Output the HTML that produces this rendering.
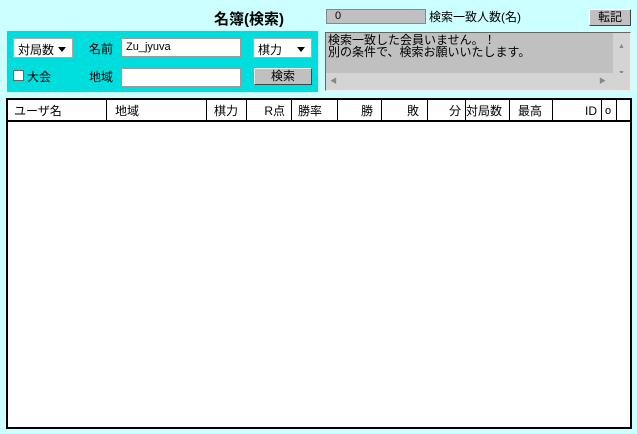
<!DOCTYPE html>
<html><head><meta charset="utf-8"><style>
*{margin:0;padding:0;box-sizing:border-box}
body{width:637px;height:434px;background:#ccffff;position:relative;overflow:hidden;font-family:"Liberation Sans","Noto Sans CJK JP",sans-serif;font-size:12px;color:#000}
.a{position:absolute}
.sel{background:#fff;border:1px solid #aaa;height:20px;padding:2px 4px;font-size:12px}
.sel:after{content:"";position:absolute;right:6px;top:8px;border:4px solid transparent;border-top:5px solid #000}
.inp{background:#fff;border:1px solid #999;height:19px;padding:2px 4px;font-size:11px}
.btn{background:#c0c0c0;border:1px solid;border-color:#fff #444 #444 #fff;text-align:center;font-size:12px}
.th{position:absolute;top:0;height:22px;border-right:1px solid #000;line-height:22px;font-size:12px}
</style></head><body>
<div class="a" style="left:214px;top:8px;font-size:15px;font-weight:bold">名簿(検索)</div>
<div class="a" style="left:326px;top:9px;width:100px;height:15px;background:#c0c0c0;border:1px solid #888;font-size:11px;padding-left:8px;line-height:13px">0</div>
<div class="a" style="left:429px;top:8px">検索一致人数(名)</div>
<div class="a btn" style="left:589px;top:9px;width:42px;height:17px;line-height:15px">転記</div>
<div class="a" style="left:7px;top:31px;width:311px;height:61px;background:#00dddd"></div>
<div class="a sel" style="left:13px;top:38px;width:60px">対局数</div>
<div class="a" style="left:89px;top:40px">名前</div>
<div class="a inp" style="left:121px;top:38px;width:120px">Zu_jyuva</div>
<div class="a sel" style="left:253px;top:38px;width:59px">棋力</div>
<div class="a" style="left:13px;top:70px;width:11px;height:11px;background:#fff;border:1px solid #666"></div>
<div class="a" style="left:27px;top:68px">大会</div>
<div class="a" style="left:89px;top:68px">地域</div>
<div class="a inp" style="left:121px;top:68px;width:120px"></div>
<div class="a btn" style="left:254px;top:68px;width:58px;height:17px;line-height:15px">検索</div>
<div class="a" style="left:325px;top:32px;width:306px;height:59px;background:#c0c0c0;border:1px solid #666;border-color:#666 #eee #eee #666;font-size:12px;line-height:12px;padding:1px 2px">検索一致した会員いません。！<br>別の条件で、検索お願いいたします。</div>
<div class="a" style="left:613px;top:33px;width:17px;height:40px;background:#d4d4d4;color:#888;font-size:7px;text-align:center;line-height:27px">▲<br>▼</div>
<div class="a" style="left:326px;top:73px;width:304px;height:17px;background:#d4d4d4;color:#888;font-size:7px;line-height:17px;padding:0 4px">◀<span style="float:right;margin-right:20px">▶</span></div>
<div class="a" style="left:6px;top:98px;width:626px;height:331px;background:#fff;border:2px solid #000">
<div class="a" style="left:0;top:0;width:622px;height:22px;border-bottom:2px solid #000">
<div class="th" style="left:0;width:99px;padding-left:6px">ユーザ名</div>
<div class="th" style="left:99px;width:100px;padding-left:8px">地域</div>
<div class="th" style="left:199px;width:40px;text-align:right;padding-right:8px">棋力</div>
<div class="th" style="left:239px;width:45px;text-align:right;padding-right:6px">R点</div>
<div class="th" style="left:284px;width:46px;padding-left:6px">勝率</div>
<div class="th" style="left:330px;width:44px;text-align:right;padding-right:8px">勝</div>
<div class="th" style="left:374px;width:46px;text-align:right;padding-right:8px">敗</div>
<div class="th" style="left:420px;width:38px;text-align:right;padding-right:4px">分</div>
<div class="th" style="left:458px;width:44px;padding-left:0">対局数</div>
<div class="th" style="left:502px;width:43px;padding-left:8px">最高</div>
<div class="th" style="left:545px;width:49px;text-align:right;padding-right:4px">ID</div>
<div class="th" style="left:594px;width:15px;padding-left:3px;font-size:11px">o</div>
</div></div>
</body></html>
